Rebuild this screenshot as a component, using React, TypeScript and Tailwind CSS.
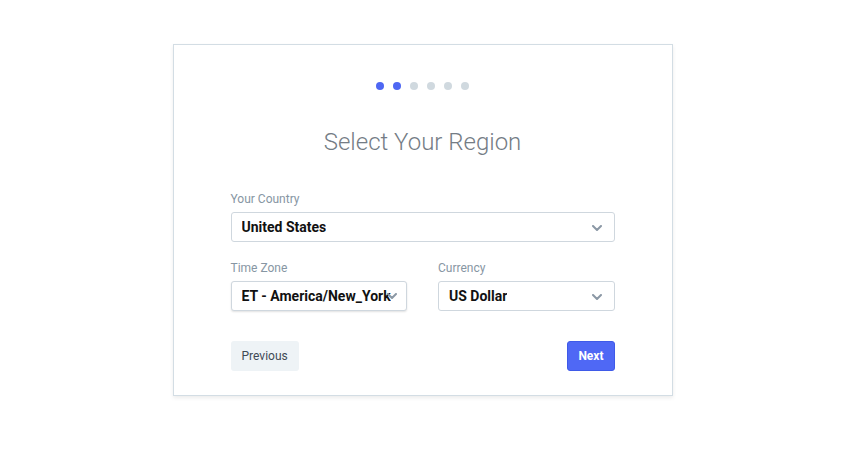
const steps = [true, true, false, false, false, false]

function Chevron({ className = '' }: { className?: string }) {
  return (
    <svg viewBox="0 0 10 6" className={`absolute h-[6px] w-[10px] ${className}`} fill="none">
      <polyline points="1,1 5,5 9,1" stroke="#8b98a5" strokeWidth="2" strokeLinecap="round" strokeLinejoin="round" />
    </svg>
  )
}

function Select({ value, className = '', tight = false }: { value: string; className?: string; tight?: boolean }) {
  return (
    <div
      className={`relative flex h-[30px] items-center rounded-[3px] border border-[#cfd7de] bg-white pl-[10px] ${tight ? 'pr-[14px] shadow-[0_1px_2px_rgba(0,0,0,0.12)]' : 'pr-8'} ${className}`}
    >
      <span className="overflow-hidden whitespace-nowrap text-[14px] font-bold text-[#111]">{value}</span>
      <Chevron className={tight ? 'right-[9px] top-[11px]' : 'right-[12px] top-[12px]'} />
    </div>
  )
}

export default function App() {
  return (
    <div className="flex min-h-[476px] w-full justify-center bg-white pt-[44px] font-['Roboto',sans-serif]">
      <div className="flex h-[352px] w-[500px] flex-col border border-[#d3dde4] bg-white px-[57px] pt-[37px] shadow-[0_2px_4px_rgba(0,0,0,0.08)]">
        {/* step dots */}
        <div className="flex justify-center gap-[9px]">
          {steps.map((on, i) => (
            <span key={i} className={`h-[8px] w-[8px] rounded-full ${on ? 'bg-[#4e67f3]' : 'bg-[#d0d9df]'}`} />
          ))}
        </div>

        <h1 className="mt-[38px] text-center text-[24px] font-light leading-[28px] text-[#747c85]">Select Your Region</h1>

        <label className="mt-[35px] text-[12px] leading-[16px] text-[#8796a3]">Your Country</label>
        <Select value="United States" className="mt-[5px]" />

        <div className="mt-[18px] grid grid-cols-2 gap-[31px]">
          <div className="flex flex-col">
            <label className="text-[12px] leading-[16px] text-[#8796a3]">Time Zone</label>
            <Select value="ET - America/New_York" className="mt-[5px]" tight />
          </div>
          <div className="flex flex-col">
            <label className="text-[12px] leading-[16px] text-[#8796a3]">Currency</label>
            <Select value="US Dollar" className="mt-[5px]" />
          </div>
        </div>

        <div className="mt-[30px] flex items-center justify-between">
          <button className="h-[30px] rounded-[3px] bg-[#eef3f6] px-[11px] text-[12px] text-[#3f4a55]">Previous</button>
          <button className="h-[30px] rounded-[3px] border border-[#3f5ae8] bg-[#4f68f5] px-[10px] text-[12px] font-bold text-white">
            Next
          </button>
        </div>
      </div>
    </div>
  )
}
